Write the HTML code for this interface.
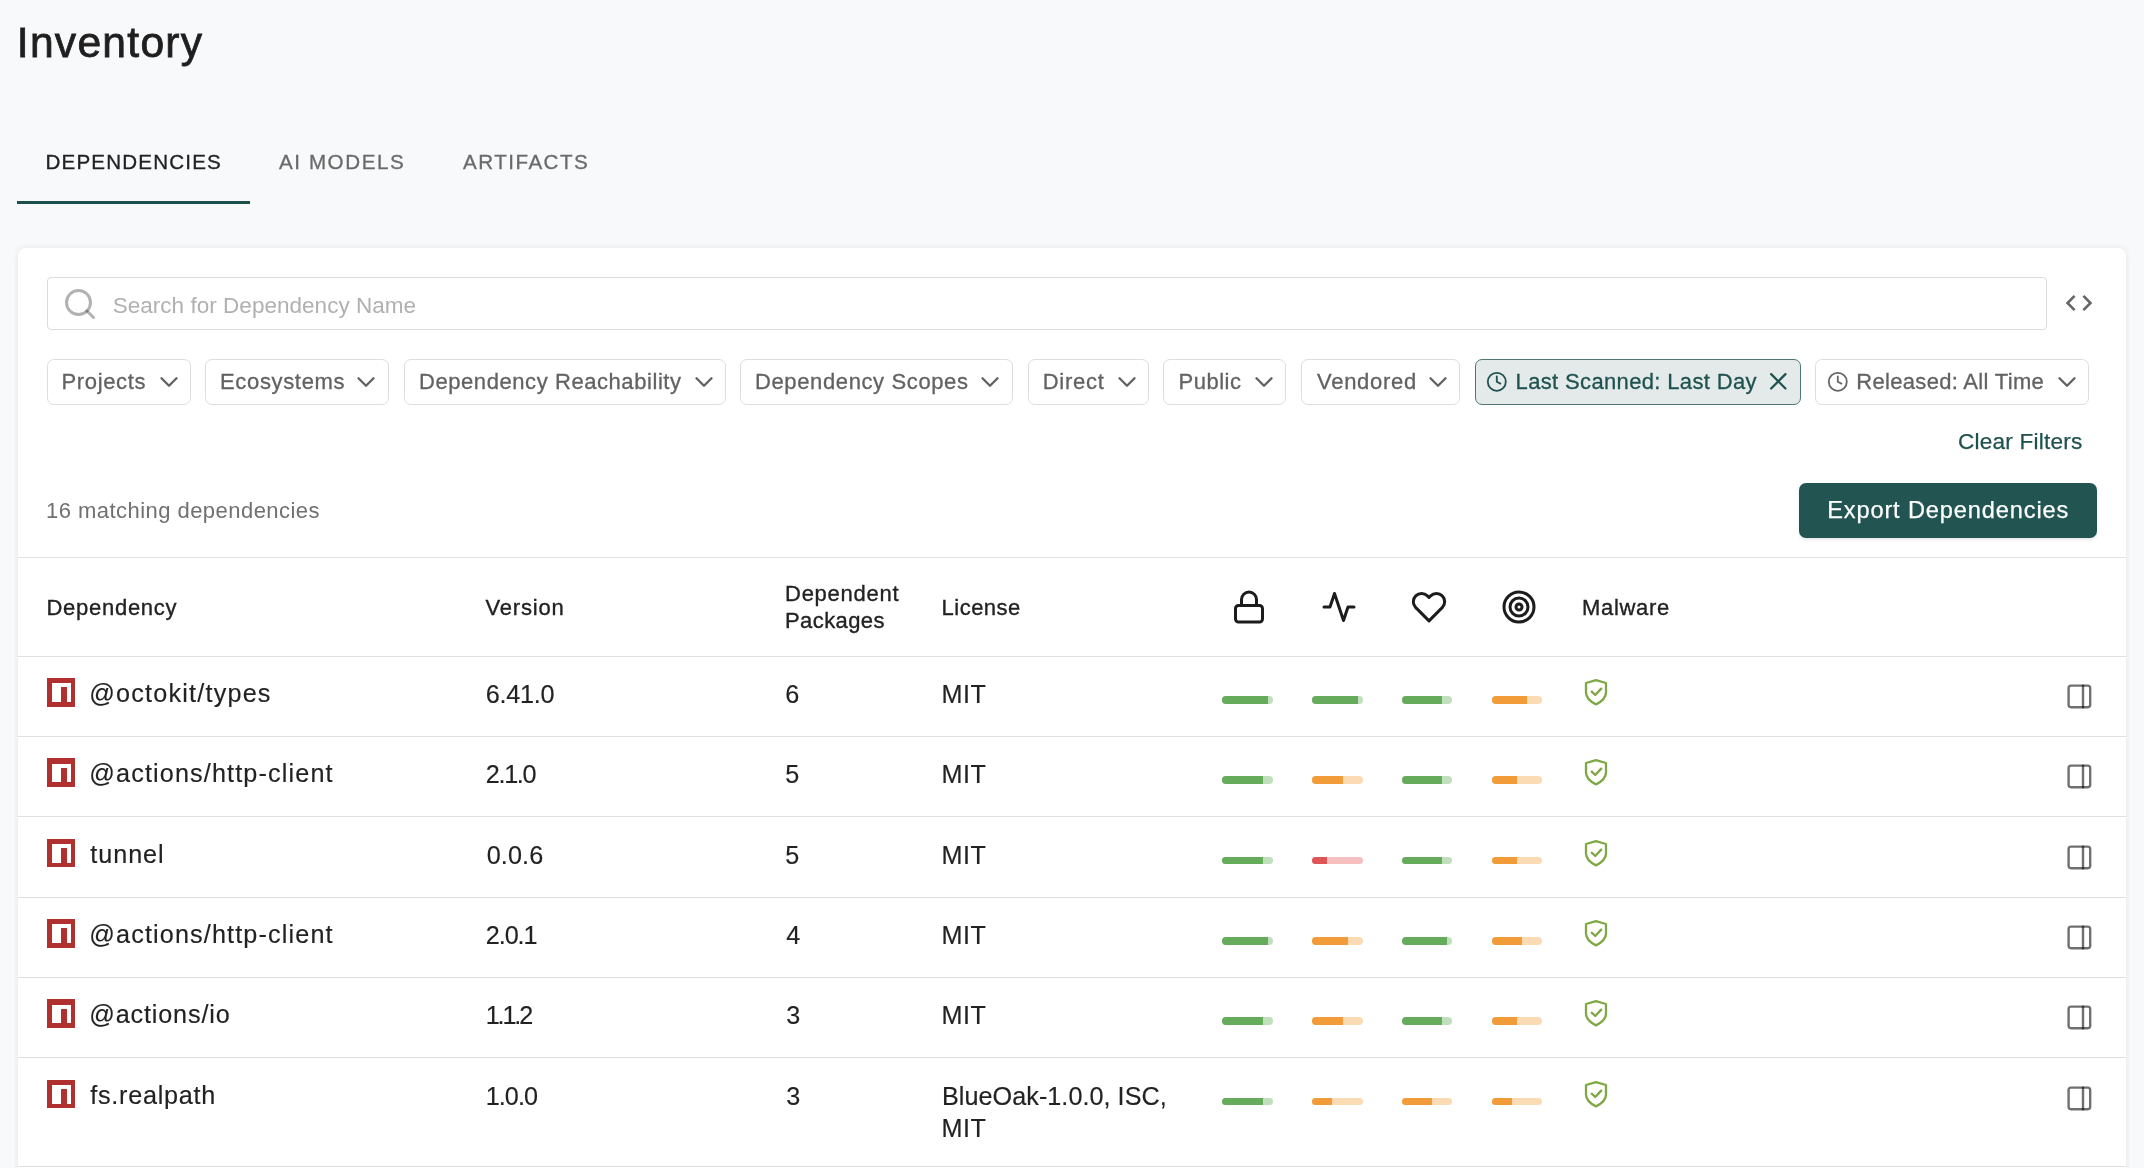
<!DOCTYPE html>
<html lang="en">
<head>
<meta charset="utf-8">
<title>Inventory</title>
<style>
*{box-sizing:border-box;margin:0;padding:0}
html,body{width:2144px;height:1168px;overflow:hidden}
body{position:relative;background:#f8f9fb;font-family:"Liberation Sans",sans-serif;color:#222}
.t{position:absolute;white-space:nowrap;line-height:1;display:block;font-weight:400;text-decoration:none}
#app{position:absolute;left:0;top:0;width:2144px;height:1168px;will-change:transform}
.card{position:absolute;left:18px;top:248px;width:2108px;height:940px;background:#fff;border-radius:8px;box-shadow:0 0 6px rgba(0,0,0,.09)}
.tabline{position:absolute;left:17px;top:201px;width:233px;height:3px;background:#1d4f4c}
.search{position:absolute;left:47px;top:277px;width:2000px;height:53px;border:1.5px solid #dcdcdc;border-radius:4px;background:#fff}
.fb{position:absolute;top:359px;height:46px;border:1.5px solid #dedede;border-radius:7px;background:#fff}
.fb.on{background:#e4eaea;border-color:#4d7773}
.export{position:absolute;left:1799px;top:483px;width:298px;height:55px;border-radius:7px;background:#225552;box-shadow:0 2px 3px rgba(0,0,0,.09)}
.hl{position:absolute;left:18px;width:2108px;height:1px;background:#e0e0e0}
svg{position:absolute;overflow:visible}
.npm{position:absolute;left:47px;width:28px;height:28.5px;background:#b03030}
.npm i{position:absolute;left:5.2px;top:5.2px;width:18.6px;height:18.8px;background:#fff}
.npm b{position:absolute;left:14.4px;top:9.2px;width:5.4px;height:15px;background:#b03030}
.bar{position:absolute;width:51px;height:7.5px;border-radius:4px;overflow:hidden}
.bar u{position:absolute;left:0;top:0;height:100%;display:block}
.g{background:#c1dfbd}.g u{background:#66ab5c}
.o{background:#fbdbb3}.o u{background:#f19c38}
.r{background:#f6c0c1}.r u{background:#df5556}
</style>
</head>
<body>
<div id="app">
<header>
<h1 class="t h1" style="left:16.8px;top:21px;font-size:42.6px;color:#1f1f1f;letter-spacing:1.26px;-webkit-text-stroke:0.8px #1f1f1f;">Inventory</h1>
<nav>
<a class="t tab" style="left:45.5px;top:152px;font-size:20.6px;color:#222;letter-spacing:1.16px;-webkit-text-stroke:0.3px #222;">DEPENDENCIES</a>
<a class="t tab" style="left:279px;top:152px;font-size:20.6px;color:#6a6a6a;letter-spacing:1.57px;-webkit-text-stroke:0.3px #6a6a6a;">AI MODELS</a>
<a class="t tab" style="left:463px;top:152px;font-size:20.6px;color:#6a6a6a;letter-spacing:1.48px;-webkit-text-stroke:0.3px #6a6a6a;">ARTIFACTS</a>
<div class="tabline"></div>
</nav>
</header>
<main>
<section class="card"></section>
<div class="search"></div>
<svg style="left:62px;top:286px" width="36" height="36" viewBox="0 0 24 24" fill="none" stroke="#000" stroke-width="2" stroke-linecap="round" stroke-linejoin="round"><circle cx="11" cy="11" r="8" stroke-opacity=".3"/><line x1="21" y1="21" x2="16.65" y2="16.65" stroke-opacity=".3"/></svg>
<span class="t ph" style="left:112.7px;top:295px;font-size:22.5px;color:#b0b0b0;letter-spacing:0.03px;">Search for Dependency Name</span>
<svg style="left:2063px;top:287px" width="32" height="32" viewBox="0 0 24 24" fill="#666"><path d="M9.4 16.6L4.8 12l4.6-4.6L8 6l-6 6 6 6 1.4-1.4zm5.2 0l4.6-4.6-4.6-4.6L16 6l6 6-6 6-1.4-1.4z"/></svg>
<div class="fb" style="left:47px;width:144px"></div>
<div class="fb" style="left:205px;width:183.5px"></div>
<div class="fb" style="left:404px;width:322px"></div>
<div class="fb" style="left:740px;width:272.5px"></div>
<div class="fb" style="left:1028px;width:121px"></div>
<div class="fb" style="left:1163px;width:123px"></div>
<div class="fb" style="left:1301px;width:159px"></div>
<div class="fb on" style="left:1475px;width:326px"></div>
<div class="fb" style="left:1815.3px;width:273.7px"></div>
<span class="t fl" style="left:61.5px;top:371px;font-size:22px;color:#626262;letter-spacing:0.65px;-webkit-text-stroke:0.3px #626262;">Projects</span>
<span class="t fl" style="left:220px;top:371px;font-size:22px;color:#626262;letter-spacing:0.66px;-webkit-text-stroke:0.3px #626262;">Ecosystems</span>
<span class="t fl" style="left:419px;top:371px;font-size:22px;color:#626262;letter-spacing:0.57px;-webkit-text-stroke:0.3px #626262;">Dependency Reachability</span>
<span class="t fl" style="left:755px;top:371px;font-size:22px;color:#626262;letter-spacing:0.62px;-webkit-text-stroke:0.3px #626262;">Dependency Scopes</span>
<span class="t fl" style="left:1042.7px;top:371px;font-size:22px;color:#626262;letter-spacing:0.73px;-webkit-text-stroke:0.3px #626262;">Direct</span>
<span class="t fl" style="left:1178.5px;top:371px;font-size:22px;color:#626262;letter-spacing:0.52px;-webkit-text-stroke:0.3px #626262;">Public</span>
<span class="t fl" style="left:1317px;top:371px;font-size:22px;color:#626262;letter-spacing:0.72px;-webkit-text-stroke:0.3px #626262;">Vendored</span>
<span class="t fl" style="left:1515.6px;top:371px;font-size:22px;color:#1f524f;letter-spacing:0.35px;-webkit-text-stroke:0.3px #1f524f;">Last Scanned: Last Day</span>
<span class="t fl" style="left:1856.3px;top:371px;font-size:22px;color:#626262;letter-spacing:0.31px;-webkit-text-stroke:0.3px #626262;">Released: All Time</span>
<svg style="left:153.8px;top:366.5px" width="30" height="30" viewBox="0 0 24 24" fill="none" stroke="#626262" stroke-width="1.9" stroke-linecap="round" stroke-linejoin="round"><polyline points="6 9 12 15 18 9"/></svg>
<svg style="left:351.3px;top:366.5px" width="30" height="30" viewBox="0 0 24 24" fill="none" stroke="#626262" stroke-width="1.9" stroke-linecap="round" stroke-linejoin="round"><polyline points="6 9 12 15 18 9"/></svg>
<svg style="left:688.8px;top:366.5px" width="30" height="30" viewBox="0 0 24 24" fill="none" stroke="#626262" stroke-width="1.9" stroke-linecap="round" stroke-linejoin="round"><polyline points="6 9 12 15 18 9"/></svg>
<svg style="left:975.3px;top:366.5px" width="30" height="30" viewBox="0 0 24 24" fill="none" stroke="#626262" stroke-width="1.9" stroke-linecap="round" stroke-linejoin="round"><polyline points="6 9 12 15 18 9"/></svg>
<svg style="left:1111.8px;top:366.5px" width="30" height="30" viewBox="0 0 24 24" fill="none" stroke="#626262" stroke-width="1.9" stroke-linecap="round" stroke-linejoin="round"><polyline points="6 9 12 15 18 9"/></svg>
<svg style="left:1248.8px;top:366.5px" width="30" height="30" viewBox="0 0 24 24" fill="none" stroke="#626262" stroke-width="1.9" stroke-linecap="round" stroke-linejoin="round"><polyline points="6 9 12 15 18 9"/></svg>
<svg style="left:1422.8px;top:366.5px" width="30" height="30" viewBox="0 0 24 24" fill="none" stroke="#626262" stroke-width="1.9" stroke-linecap="round" stroke-linejoin="round"><polyline points="6 9 12 15 18 9"/></svg>
<svg style="left:2051.8px;top:366.5px" width="30" height="30" viewBox="0 0 24 24" fill="none" stroke="#626262" stroke-width="1.9" stroke-linecap="round" stroke-linejoin="round"><polyline points="6 9 12 15 18 9"/></svg>
<svg style="left:1764.3px;top:367px" width="28.6" height="28.6" viewBox="0 0 24 24" fill="none" stroke="#1f524f" stroke-width="1.9" stroke-linecap="round" stroke-linejoin="round"><line x1="18" y1="6" x2="6" y2="18"/><line x1="6" y1="6" x2="18" y2="18"/></svg>
<svg style="left:1485.9px;top:370.9px" width="21.6" height="21.6" viewBox="0 0 24 24" fill="none" stroke="#1f524f" stroke-width="2" stroke-linecap="round" stroke-linejoin="round"><circle cx="12" cy="12" r="10"/><polyline points="12 6 12 12 16 14"/></svg>
<svg style="left:1827.1px;top:370.9px" width="21.6" height="21.6" viewBox="0 0 24 24" fill="none" stroke="#666" stroke-width="2" stroke-linecap="round" stroke-linejoin="round"><circle cx="12" cy="12" r="10"/><polyline points="12 6 12 12 16 14"/></svg>
<a class="t cf" style="left:1958px;top:431px;font-size:22.6px;color:#1f524f;letter-spacing:0.21px;-webkit-text-stroke:0.25px #1f524f;">Clear Filters</a>
<span class="t cnt" style="left:46px;top:500px;font-size:22px;color:#707070;letter-spacing:0.46px;">16 matching dependencies</span>
<div class="export"></div>
<span class="t exp" style="left:1827.2px;top:499px;font-size:23.6px;color:#fff;letter-spacing:0.86px;-webkit-text-stroke:0.25px #fff;">Export Dependencies</span>
<div class="hl" style="top:557px"></div>
<span class="t th" style="left:46.5px;top:597px;font-size:22px;color:#222;letter-spacing:0.72px;-webkit-text-stroke:0.35px #222;">Dependency</span>
<span class="t th" style="left:485.5px;top:597px;font-size:22px;color:#222;letter-spacing:0.81px;-webkit-text-stroke:0.35px #222;">Version</span>
<span class="t th" style="left:785px;top:583px;font-size:22px;color:#222;letter-spacing:0.75px;-webkit-text-stroke:0.35px #222;">Dependent</span>
<span class="t th" style="left:785px;top:610px;font-size:22px;color:#222;letter-spacing:0.41px;-webkit-text-stroke:0.35px #222;">Packages</span>
<span class="t th" style="left:941.6px;top:597px;font-size:22px;color:#222;letter-spacing:0.48px;-webkit-text-stroke:0.35px #222;">License</span>
<span class="t th" style="left:1582px;top:597px;font-size:22px;color:#222;letter-spacing:0.68px;-webkit-text-stroke:0.35px #222;">Malware</span>
<svg style="left:1231px;top:589px" width="36" height="36" viewBox="0 0 24 24" fill="none" stroke="#1c1c1c" stroke-width="2" stroke-linecap="round" stroke-linejoin="round"><rect x="3" y="11" width="18" height="11" rx="2" ry="2"/><path d="M7 11V7a5 5 0 0 1 10 0v4"/></svg>
<svg style="left:1321px;top:589px" width="36" height="36" viewBox="0 0 24 24" fill="none" stroke="#1c1c1c" stroke-width="2" stroke-linecap="round" stroke-linejoin="round"><polyline points="22 12 18 12 15 21 9 3 6 12 2 12"/></svg>
<svg style="left:1411px;top:589px" width="36" height="36" viewBox="0 0 24 24" fill="none" stroke="#1c1c1c" stroke-width="2" stroke-linecap="round" stroke-linejoin="round"><path d="M20.84 4.61a5.5 5.5 0 0 0-7.78 0L12 5.67l-1.06-1.06a5.5 5.5 0 0 0-7.78 7.78l1.06 1.06L12 21.23l7.78-7.78 1.06-1.06a5.5 5.5 0 0 0 0-7.78z"/></svg>
<svg style="left:1501px;top:589px" width="36" height="36" viewBox="0 0 24 24" fill="none" stroke="#1c1c1c" stroke-width="2" stroke-linecap="round" stroke-linejoin="round"><circle cx="12" cy="12" r="10"/><circle cx="12" cy="12" r="6"/><circle cx="12" cy="12" r="2"/></svg>
<div class="hl" style="top:656px"></div>
<div class="npm" style="top:678px"><i></i><b></b></div>
<div class="hl" style="top:736px"></div>
<div class="npm" style="top:758.33px"><i></i><b></b></div>
<div class="hl" style="top:816px"></div>
<div class="npm" style="top:838.67px"><i></i><b></b></div>
<div class="hl" style="top:897px"></div>
<div class="npm" style="top:919px"><i></i><b></b></div>
<div class="hl" style="top:977px"></div>
<div class="npm" style="top:999.33px"><i></i><b></b></div>
<div class="hl" style="top:1057px"></div>
<div class="npm" style="top:1079.66px"><i></i><b></b></div>
<span class="t td" style="left:89.3px;top:681px;font-size:25.2px;color:#222;letter-spacing:1.2px;-webkit-text-stroke:0.15px #222;">@octokit/types</span>
<span class="t td" style="left:485.7px;top:682px;font-size:25.2px;color:#222;letter-spacing:-0.22px;-webkit-text-stroke:0.15px #222;">6.41.0</span>
<span class="t td" style="left:785.3px;top:682px;font-size:25.2px;color:#222;-webkit-text-stroke:0.15px #222;">6</span>
<span class="t td" style="left:941.5px;top:682px;font-size:25.2px;color:#222;letter-spacing:0.51px;-webkit-text-stroke:0.15px #222;">MIT</span>
<span class="t td" style="left:89.3px;top:761px;font-size:25.2px;color:#222;letter-spacing:1.14px;-webkit-text-stroke:0.15px #222;">@actions/http-client</span>
<span class="t td" style="left:485.7px;top:762px;font-size:25.2px;color:#222;letter-spacing:-1.28px;-webkit-text-stroke:0.15px #222;">2.1.0</span>
<span class="t td" style="left:785.3px;top:762px;font-size:25.2px;color:#222;-webkit-text-stroke:0.15px #222;">5</span>
<span class="t td" style="left:941.5px;top:762px;font-size:25.2px;color:#222;letter-spacing:0.51px;-webkit-text-stroke:0.15px #222;">MIT</span>
<span class="t td" style="left:90.3px;top:842px;font-size:25.2px;color:#222;letter-spacing:0.95px;-webkit-text-stroke:0.15px #222;">tunnel</span>
<span class="t td" style="left:486.7px;top:843px;font-size:25.2px;color:#222;letter-spacing:0.12px;-webkit-text-stroke:0.15px #222;">0.0.6</span>
<span class="t td" style="left:785.3px;top:843px;font-size:25.2px;color:#222;-webkit-text-stroke:0.15px #222;">5</span>
<span class="t td" style="left:941.5px;top:843px;font-size:25.2px;color:#222;letter-spacing:0.51px;-webkit-text-stroke:0.15px #222;">MIT</span>
<span class="t td" style="left:89.3px;top:922px;font-size:25.2px;color:#222;letter-spacing:1.14px;-webkit-text-stroke:0.15px #222;">@actions/http-client</span>
<span class="t td" style="left:485.7px;top:923px;font-size:25.2px;color:#222;letter-spacing:-1.03px;-webkit-text-stroke:0.15px #222;">2.0.1</span>
<span class="t td" style="left:786.3px;top:923px;font-size:25.2px;color:#222;-webkit-text-stroke:0.15px #222;">4</span>
<span class="t td" style="left:941.5px;top:923px;font-size:25.2px;color:#222;letter-spacing:0.51px;-webkit-text-stroke:0.15px #222;">MIT</span>
<span class="t td" style="left:89.3px;top:1002px;font-size:25.2px;color:#222;letter-spacing:0.84px;-webkit-text-stroke:0.15px #222;">@actions/io</span>
<span class="t td" style="left:485.7px;top:1003px;font-size:25.2px;color:#222;letter-spacing:-2.13px;-webkit-text-stroke:0.15px #222;">1.1.2</span>
<span class="t td" style="left:786.3px;top:1003px;font-size:25.2px;color:#222;-webkit-text-stroke:0.15px #222;">3</span>
<span class="t td" style="left:941.5px;top:1003px;font-size:25.2px;color:#222;letter-spacing:0.51px;-webkit-text-stroke:0.15px #222;">MIT</span>
<span class="t td" style="left:90.3px;top:1083px;font-size:25.2px;color:#222;letter-spacing:0.74px;-webkit-text-stroke:0.15px #222;">fs.realpath</span>
<span class="t td" style="left:485.7px;top:1084px;font-size:25.2px;color:#222;letter-spacing:-0.93px;-webkit-text-stroke:0.15px #222;">1.0.0</span>
<span class="t td" style="left:786.3px;top:1084px;font-size:25.2px;color:#222;-webkit-text-stroke:0.15px #222;">3</span>
<span class="t td" style="left:942px;top:1084px;font-size:25.2px;color:#222;letter-spacing:0.04px;-webkit-text-stroke:0.15px #222;">BlueOak-1.0.0, ISC,</span>
<span class="t td" style="left:941.5px;top:1116px;font-size:25.2px;color:#222;letter-spacing:0.51px;-webkit-text-stroke:0.15px #222;">MIT</span>
<div class="bar g" style="left:1222px;top:696px;width:51px"><u style="width:90%"></u></div>
<div class="bar g" style="left:1312px;top:696px;width:51px"><u style="width:90%"></u></div>
<div class="bar g" style="left:1402px;top:696px;width:50px"><u style="width:80%"></u></div>
<div class="bar o" style="left:1492px;top:696px;width:50px"><u style="width:70%"></u></div>
<svg style="left:1583.1px;top:678px" width="26" height="30" viewBox="0 0 26 30" fill="none" stroke="#7ea843" stroke-width="2.3" stroke-linecap="round" stroke-linejoin="round"><path d="M13 2.2 L23 5 V14.5 C23 19.8 18.6 23.6 13 26.4 C7.4 23.6 3 19.8 3 14.5 V5 Z"/><polyline points="8.7 13.7 12.25 17 18.2 10.6"/></svg>
<svg style="left:2065px;top:681.9px" width="28.8" height="28.8" viewBox="0 0 24 24" fill="none" stroke="#000" stroke-opacity=".56" stroke-width="2" stroke-linecap="round" stroke-linejoin="round"><rect x="3" y="3" width="18" height="18" rx="2" ry="2"/><line x1="15" y1="3" x2="15" y2="21"/></svg>
<div class="bar g" style="left:1222px;top:776.33px;width:51px"><u style="width:80%"></u></div>
<div class="bar o" style="left:1312px;top:776.33px;width:51px"><u style="width:60%"></u></div>
<div class="bar g" style="left:1402px;top:776.33px;width:50px"><u style="width:80%"></u></div>
<div class="bar o" style="left:1492px;top:776.33px;width:50px"><u style="width:50%"></u></div>
<svg style="left:1583.1px;top:758.33px" width="26" height="30" viewBox="0 0 26 30" fill="none" stroke="#7ea843" stroke-width="2.3" stroke-linecap="round" stroke-linejoin="round"><path d="M13 2.2 L23 5 V14.5 C23 19.8 18.6 23.6 13 26.4 C7.4 23.6 3 19.8 3 14.5 V5 Z"/><polyline points="8.7 13.7 12.25 17 18.2 10.6"/></svg>
<svg style="left:2065px;top:762.23px" width="28.8" height="28.8" viewBox="0 0 24 24" fill="none" stroke="#000" stroke-opacity=".56" stroke-width="2" stroke-linecap="round" stroke-linejoin="round"><rect x="3" y="3" width="18" height="18" rx="2" ry="2"/><line x1="15" y1="3" x2="15" y2="21"/></svg>
<div class="bar g" style="left:1222px;top:856.67px;width:51px"><u style="width:80%"></u></div>
<div class="bar r" style="left:1312px;top:856.67px;width:51px"><u style="width:30%"></u></div>
<div class="bar g" style="left:1402px;top:856.67px;width:50px"><u style="width:80%"></u></div>
<div class="bar o" style="left:1492px;top:856.67px;width:50px"><u style="width:50%"></u></div>
<svg style="left:1583.1px;top:838.67px" width="26" height="30" viewBox="0 0 26 30" fill="none" stroke="#7ea843" stroke-width="2.3" stroke-linecap="round" stroke-linejoin="round"><path d="M13 2.2 L23 5 V14.5 C23 19.8 18.6 23.6 13 26.4 C7.4 23.6 3 19.8 3 14.5 V5 Z"/><polyline points="8.7 13.7 12.25 17 18.2 10.6"/></svg>
<svg style="left:2065px;top:842.57px" width="28.8" height="28.8" viewBox="0 0 24 24" fill="none" stroke="#000" stroke-opacity=".56" stroke-width="2" stroke-linecap="round" stroke-linejoin="round"><rect x="3" y="3" width="18" height="18" rx="2" ry="2"/><line x1="15" y1="3" x2="15" y2="21"/></svg>
<div class="bar g" style="left:1222px;top:937px;width:51px"><u style="width:90%"></u></div>
<div class="bar o" style="left:1312px;top:937px;width:51px"><u style="width:70%"></u></div>
<div class="bar g" style="left:1402px;top:937px;width:50px"><u style="width:90%"></u></div>
<div class="bar o" style="left:1492px;top:937px;width:50px"><u style="width:60%"></u></div>
<svg style="left:1583.1px;top:919px" width="26" height="30" viewBox="0 0 26 30" fill="none" stroke="#7ea843" stroke-width="2.3" stroke-linecap="round" stroke-linejoin="round"><path d="M13 2.2 L23 5 V14.5 C23 19.8 18.6 23.6 13 26.4 C7.4 23.6 3 19.8 3 14.5 V5 Z"/><polyline points="8.7 13.7 12.25 17 18.2 10.6"/></svg>
<svg style="left:2065px;top:922.9px" width="28.8" height="28.8" viewBox="0 0 24 24" fill="none" stroke="#000" stroke-opacity=".56" stroke-width="2" stroke-linecap="round" stroke-linejoin="round"><rect x="3" y="3" width="18" height="18" rx="2" ry="2"/><line x1="15" y1="3" x2="15" y2="21"/></svg>
<div class="bar g" style="left:1222px;top:1017.33px;width:51px"><u style="width:80%"></u></div>
<div class="bar o" style="left:1312px;top:1017.33px;width:51px"><u style="width:60%"></u></div>
<div class="bar g" style="left:1402px;top:1017.33px;width:50px"><u style="width:80%"></u></div>
<div class="bar o" style="left:1492px;top:1017.33px;width:50px"><u style="width:50%"></u></div>
<svg style="left:1583.1px;top:999.33px" width="26" height="30" viewBox="0 0 26 30" fill="none" stroke="#7ea843" stroke-width="2.3" stroke-linecap="round" stroke-linejoin="round"><path d="M13 2.2 L23 5 V14.5 C23 19.8 18.6 23.6 13 26.4 C7.4 23.6 3 19.8 3 14.5 V5 Z"/><polyline points="8.7 13.7 12.25 17 18.2 10.6"/></svg>
<svg style="left:2065px;top:1003.23px" width="28.8" height="28.8" viewBox="0 0 24 24" fill="none" stroke="#000" stroke-opacity=".56" stroke-width="2" stroke-linecap="round" stroke-linejoin="round"><rect x="3" y="3" width="18" height="18" rx="2" ry="2"/><line x1="15" y1="3" x2="15" y2="21"/></svg>
<div class="bar g" style="left:1222px;top:1097.66px;width:51px"><u style="width:80%"></u></div>
<div class="bar o" style="left:1312px;top:1097.66px;width:51px"><u style="width:40%"></u></div>
<div class="bar o" style="left:1402px;top:1097.66px;width:50px"><u style="width:60%"></u></div>
<div class="bar o" style="left:1492px;top:1097.66px;width:50px"><u style="width:40%"></u></div>
<svg style="left:1583.1px;top:1079.66px" width="26" height="30" viewBox="0 0 26 30" fill="none" stroke="#7ea843" stroke-width="2.3" stroke-linecap="round" stroke-linejoin="round"><path d="M13 2.2 L23 5 V14.5 C23 19.8 18.6 23.6 13 26.4 C7.4 23.6 3 19.8 3 14.5 V5 Z"/><polyline points="8.7 13.7 12.25 17 18.2 10.6"/></svg>
<svg style="left:2065px;top:1083.57px" width="28.8" height="28.8" viewBox="0 0 24 24" fill="none" stroke="#000" stroke-opacity=".56" stroke-width="2" stroke-linecap="round" stroke-linejoin="round"><rect x="3" y="3" width="18" height="18" rx="2" ry="2"/><line x1="15" y1="3" x2="15" y2="21"/></svg>
<div class="hl" style="top:1166px"></div>
</main>
</div>
</body>
</html>
